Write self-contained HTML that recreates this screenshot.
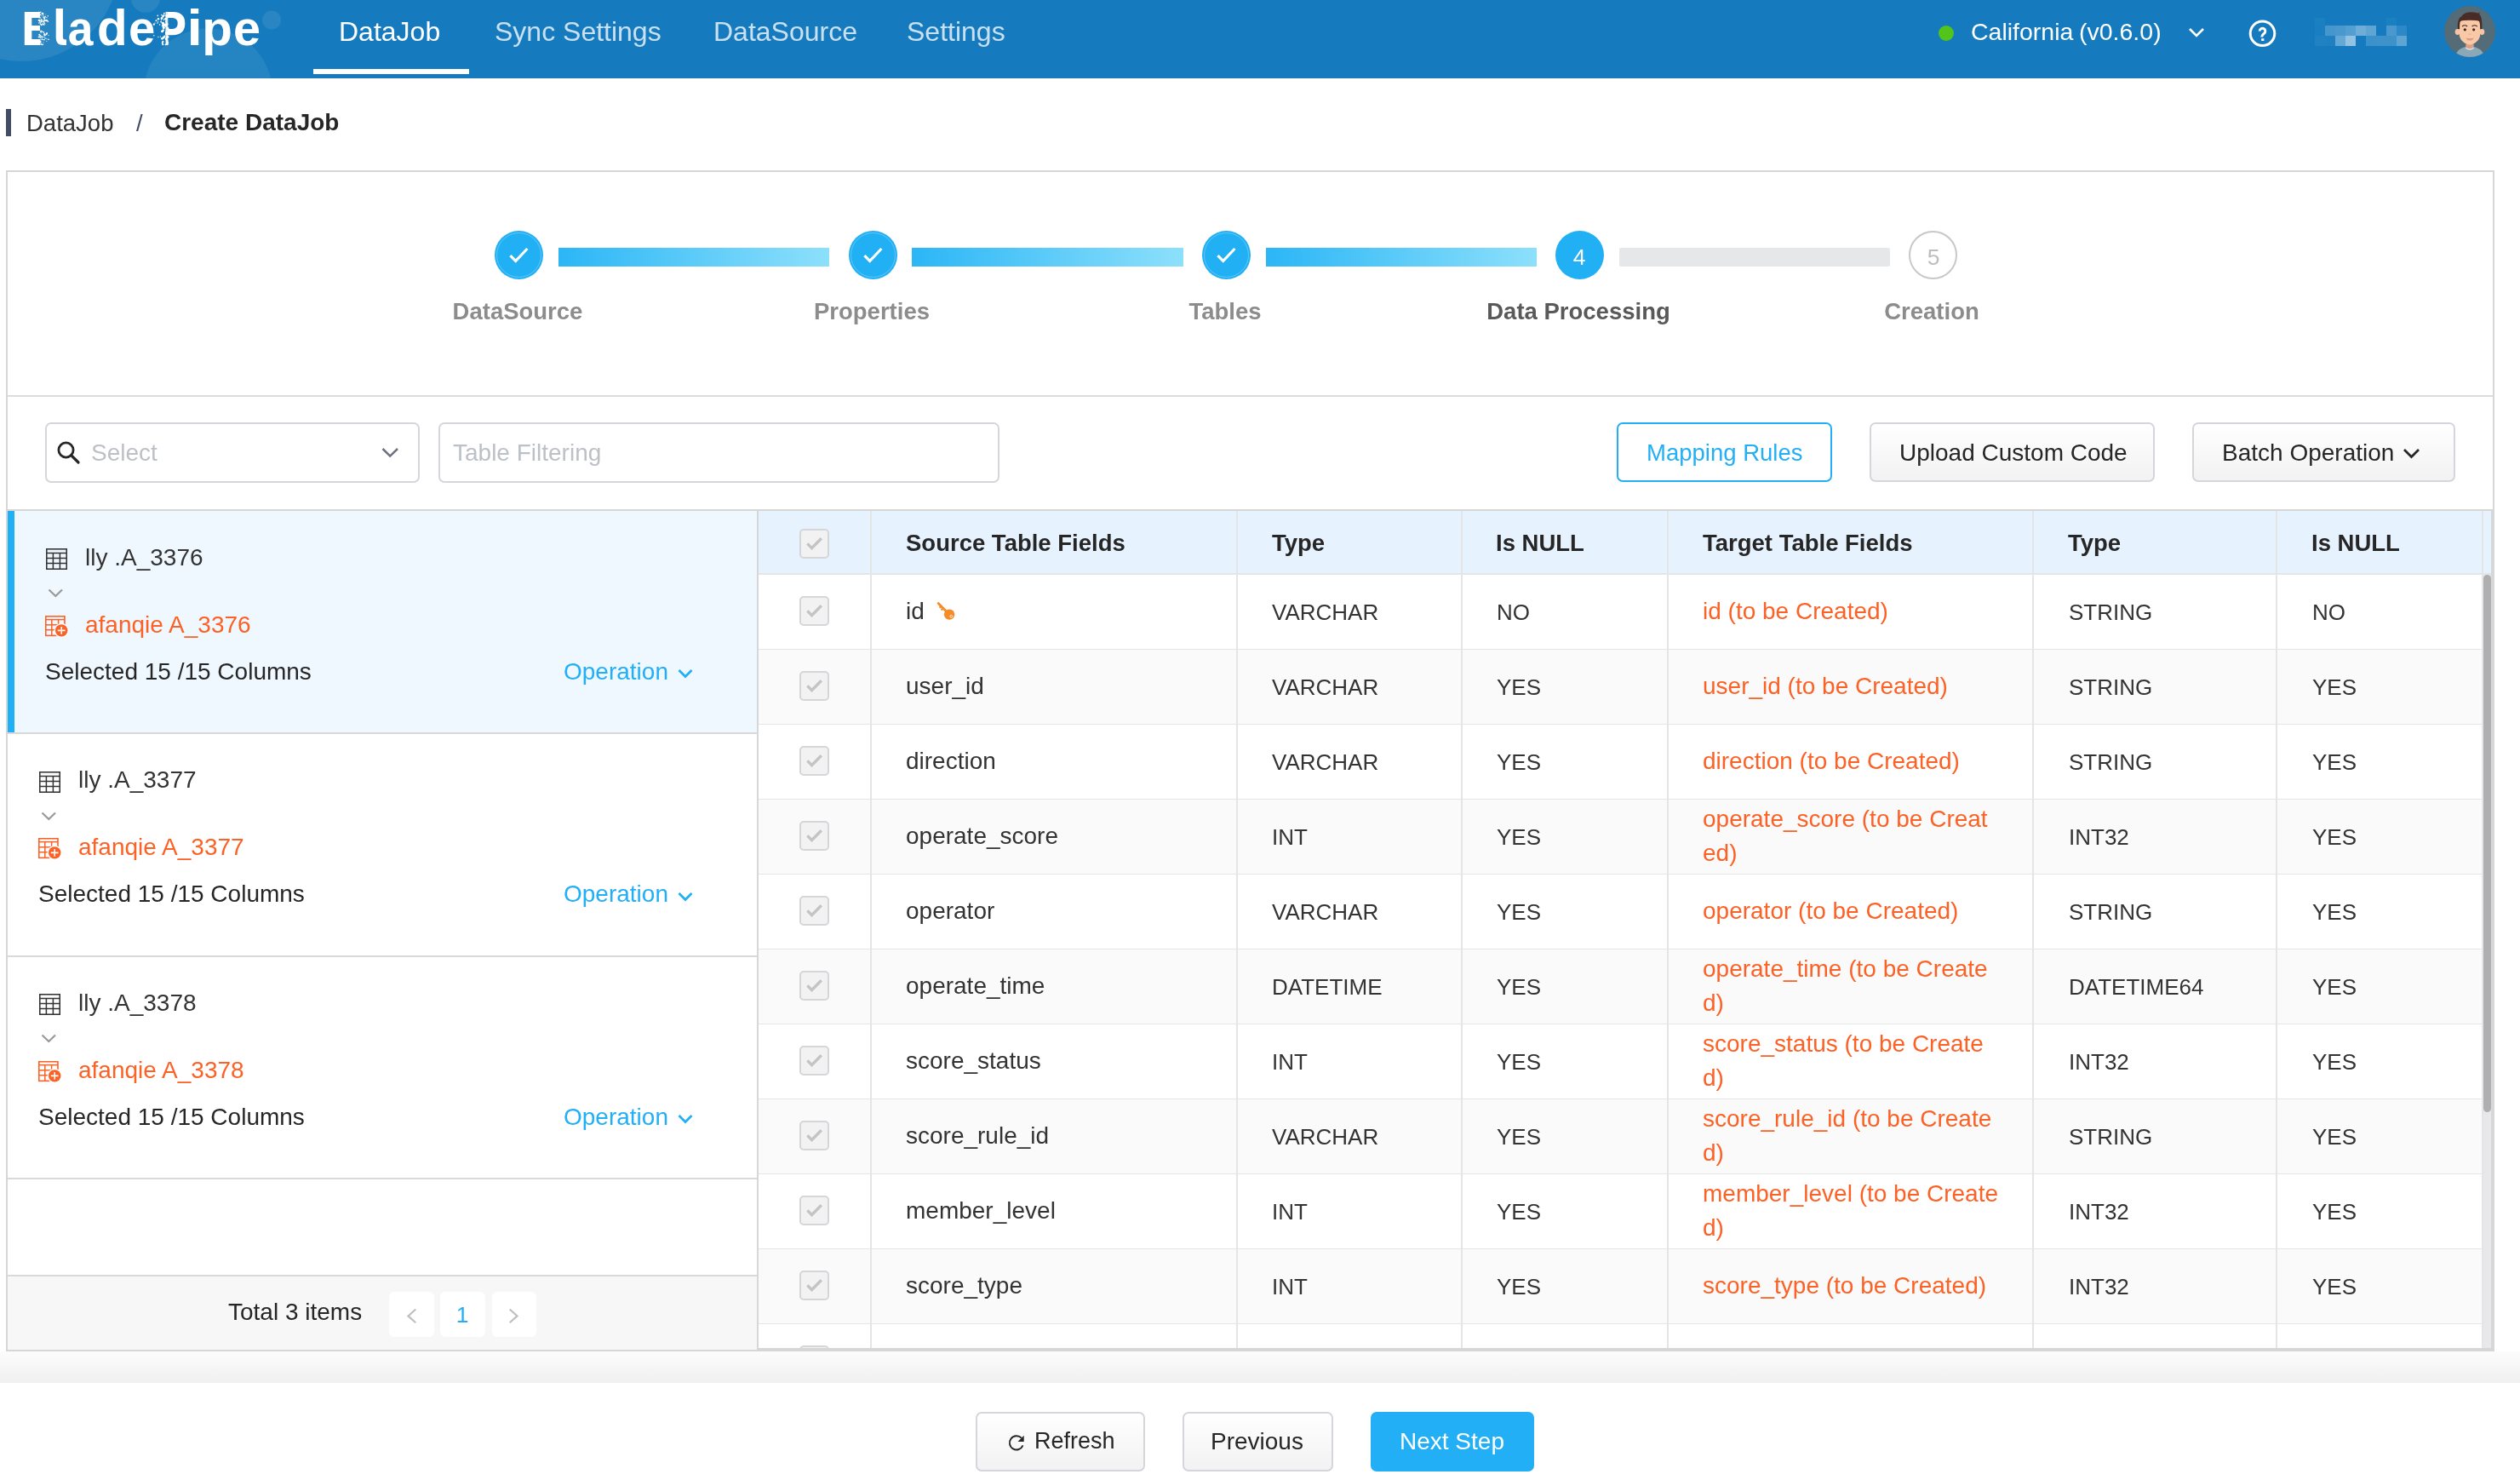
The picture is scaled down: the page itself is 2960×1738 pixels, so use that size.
<!DOCTYPE html>
<html><head><meta charset="utf-8"><title>BladePipe - Create DataJob</title>
<style>
html,body{margin:0;padding:0;}
body{width:2960px;height:1738px;position:relative;overflow:hidden;background:#fff;font-family:"Liberation Sans",sans-serif;}
.t{position:absolute;white-space:pre;will-change:transform;}
svg{display:block;}
</style></head><body>
<div style="position:absolute;left:0px;top:0px;width:2960px;height:92px;background:#157bbe;overflow:hidden"></div>
<svg style="position:absolute;left:0px;top:0px;" width="400" height="92" viewBox="0 0 400 92">
<circle cx="25.5" cy="-43" r="115" fill="rgba(255,255,255,0.085)"/>
<circle cx="171" cy="-2.3" r="17" fill="rgba(255,255,255,0.085)"/>
<circle cx="319" cy="23.5" r="11" fill="rgba(255,255,255,0.085)"/>
<circle cx="244.5" cy="109" r="75.5" fill="rgba(255,255,255,0.07)"/>
</svg>
<svg style="position:absolute;left:0px;top:0px;" width="320" height="92" viewBox="0 0 320 92"><text transform="matrix(0.9206 0 0 0.9866 79.70 52.9)" x="0" y="0" font-family="Liberation Sans" font-weight="700" font-size="58.0" fill="#fff">a</text><text transform="matrix(1.0072 0 0 1.0178 114.06 52.9)" x="0" y="0" font-family="Liberation Sans" font-weight="700" font-size="58.0" fill="#fff">d</text><text transform="matrix(0.9698 0 0 0.9930 150.95 52.9)" x="0" y="0" font-family="Liberation Sans" font-weight="700" font-size="58.0" fill="#fff">e</text><text transform="matrix(1.1367 0 0 1.0178 219.39 52.9)" x="0" y="0" font-family="Liberation Sans" font-weight="700" font-size="58.0" fill="#fff">i</text><text transform="matrix(1.0072 0 0 0.9930 237.30 52.9)" x="0" y="0" font-family="Liberation Sans" font-weight="700" font-size="58.0" fill="#fff">p</text><text transform="matrix(0.9950 0 0 0.9930 273.99 52.9)" x="0" y="0" font-family="Liberation Sans" font-weight="700" font-size="58.0" fill="#fff">e</text><path d="M65.7 10.1 H73.9 V44 q0 2.4 2.3 2.4 h1.8 V52.9 h-3.6 q-8.7 0 -8.7 -8.5 z" fill="#fff"/><path d="M28.8 13.9 H47.1 V21.1 H37.3 V30 H47 V36 H37.3 V46 H47.1 V52.9 H28.8 Z" fill="#fff"/><circle cx="49.71" cy="19.88" r="0.43" fill="#fff"/><circle cx="50.25" cy="16.26" r="1.00" fill="#fff"/><circle cx="46.41" cy="17.54" r="0.48" fill="#fff"/><circle cx="56.25" cy="18.83" r="0.71" fill="#fff"/><circle cx="50.66" cy="52.07" r="0.62" fill="#fff"/><circle cx="56.66" cy="25.29" r="0.59" fill="#fff"/><circle cx="47.03" cy="26.03" r="0.88" fill="#fff"/><circle cx="47.85" cy="36.68" r="1.03" fill="#fff"/><circle cx="46.32" cy="16.32" r="0.57" fill="#fff"/><circle cx="49.58" cy="36.84" r="0.83" fill="#fff"/><circle cx="49.40" cy="44.98" r="0.60" fill="#fff"/><circle cx="48.67" cy="36.40" r="0.76" fill="#fff"/><circle cx="50.94" cy="43.53" r="0.66" fill="#fff"/><circle cx="51.66" cy="39.90" r="0.51" fill="#fff"/><circle cx="51.50" cy="20.55" r="0.51" fill="#fff"/><circle cx="46.27" cy="43.96" r="0.54" fill="#fff"/><circle cx="48.72" cy="29.25" r="0.99" fill="#fff"/><circle cx="47.46" cy="20.87" r="0.72" fill="#fff"/><circle cx="53.16" cy="24.25" r="0.54" fill="#fff"/><circle cx="50.95" cy="28.40" r="0.99" fill="#fff"/><circle cx="46.20" cy="49.08" r="1.05" fill="#fff"/><circle cx="50.69" cy="18.04" r="0.69" fill="#fff"/><circle cx="46.31" cy="16.63" r="0.49" fill="#fff"/><circle cx="47.61" cy="27.26" r="0.53" fill="#fff"/><circle cx="45.50" cy="19.90" r="0.46" fill="#fff"/><circle cx="53.48" cy="19.79" r="0.62" fill="#fff"/><circle cx="50.02" cy="28.20" r="0.46" fill="#fff"/><circle cx="46.62" cy="17.99" r="0.56" fill="#fff"/><circle cx="48.94" cy="46.33" r="0.57" fill="#fff"/><circle cx="45.80" cy="51.09" r="0.77" fill="#fff"/><circle cx="54.55" cy="24.18" r="0.98" fill="#fff"/><circle cx="47.67" cy="44.11" r="0.89" fill="#fff"/><circle cx="50.12" cy="15.13" r="0.67" fill="#fff"/><circle cx="49.13" cy="24.11" r="0.67" fill="#fff"/><circle cx="48.37" cy="22.85" r="0.74" fill="#fff"/><circle cx="48.16" cy="38.34" r="0.64" fill="#fff"/><circle cx="53.99" cy="45.19" r="0.62" fill="#fff"/><circle cx="47.82" cy="44.78" r="0.44" fill="#fff"/><circle cx="54.92" cy="20.63" r="0.58" fill="#fff"/><circle cx="47.46" cy="49.29" r="1.03" fill="#fff"/><circle cx="47.40" cy="46.23" r="0.48" fill="#fff"/><circle cx="47.20" cy="14.56" r="0.73" fill="#fff"/><circle cx="56.83" cy="46.22" r="0.81" fill="#fff"/><circle cx="48.77" cy="25.43" r="0.96" fill="#fff"/><circle cx="53.12" cy="24.12" r="0.54" fill="#fff"/><circle cx="47.20" cy="49.49" r="0.58" fill="#fff"/><circle cx="50.97" cy="49.79" r="0.56" fill="#fff"/><circle cx="47.88" cy="14.15" r="0.66" fill="#fff"/><circle cx="52.72" cy="44.59" r="0.69" fill="#fff"/><circle cx="52.78" cy="23.69" r="1.02" fill="#fff"/><circle cx="51.26" cy="37.89" r="0.95" fill="#fff"/><circle cx="52.16" cy="41.02" r="0.97" fill="#fff"/><circle cx="57.76" cy="46.76" r="0.41" fill="#fff"/><circle cx="46.44" cy="23.38" r="0.42" fill="#fff"/><circle cx="47.51" cy="41.93" r="0.86" fill="#fff"/><circle cx="47.36" cy="48.43" r="0.98" fill="#fff"/><circle cx="48.35" cy="51.15" r="0.71" fill="#fff"/><circle cx="52.20" cy="27.23" r="0.78" fill="#fff"/><circle cx="49.64" cy="42.16" r="0.40" fill="#fff"/><circle cx="45.74" cy="26.93" r="0.65" fill="#fff"/><circle cx="46.86" cy="24.36" r="1.00" fill="#fff"/><circle cx="55.63" cy="24.55" r="0.94" fill="#fff"/><circle cx="52.92" cy="41.32" r="0.96" fill="#fff"/><circle cx="46.25" cy="40.84" r="1.03" fill="#fff"/><circle cx="46.44" cy="50.60" r="0.56" fill="#fff"/><circle cx="48.60" cy="18.27" r="0.47" fill="#fff"/><circle cx="46.15" cy="21.87" r="0.50" fill="#fff"/><circle cx="49.47" cy="43.62" r="0.74" fill="#fff"/><circle cx="52.00" cy="20.94" r="0.84" fill="#fff"/><circle cx="45.74" cy="23.77" r="1.01" fill="#fff"/><circle cx="51.94" cy="46.55" r="0.87" fill="#fff"/><circle cx="49.96" cy="46.46" r="0.82" fill="#fff"/><circle cx="50.02" cy="16.12" r="0.90" fill="#fff"/><circle cx="46.42" cy="42.89" r="0.70" fill="#fff"/><circle cx="47.62" cy="17.29" r="0.76" fill="#fff"/><circle cx="49.17" cy="23.45" r="0.43" fill="#fff"/><circle cx="51.47" cy="20.14" r="0.91" fill="#fff"/><circle cx="49.52" cy="27.91" r="0.55" fill="#fff"/><circle cx="52.04" cy="21.84" r="1.00" fill="#fff"/><circle cx="45.56" cy="24.30" r="0.82" fill="#fff"/><circle cx="50.69" cy="15.63" r="0.60" fill="#fff"/><circle cx="49.46" cy="23.08" r="0.48" fill="#fff"/><circle cx="54.81" cy="48.28" r="0.56" fill="#fff"/><circle cx="49.74" cy="52.40" r="0.81" fill="#fff"/><circle cx="54.91" cy="39.09" r="0.85" fill="#fff"/><circle cx="55.04" cy="45.68" r="0.47" fill="#fff"/><circle cx="54.51" cy="22.97" r="0.45" fill="#fff"/><circle cx="47.23" cy="28.07" r="0.74" fill="#fff"/><circle cx="52.46" cy="39.71" r="0.78" fill="#fff"/><circle cx="55.08" cy="23.84" r="0.65" fill="#fff"/><circle cx="48.95" cy="42.44" r="0.55" fill="#fff"/><circle cx="51.92" cy="28.92" r="0.79" fill="#fff"/><circle cx="53.86" cy="17.02" r="0.41" fill="#fff"/><circle cx="48.80" cy="42.99" r="0.60" fill="#fff"/><circle cx="46.29" cy="24.48" r="0.70" fill="#fff"/><circle cx="54.50" cy="40.35" r="1.02" fill="#fff"/><circle cx="48.09" cy="52.15" r="0.82" fill="#fff"/><circle cx="51.34" cy="24.48" r="0.97" fill="#fff"/><circle cx="53.06" cy="19.53" r="0.71" fill="#fff"/><circle cx="57.03" cy="41.43" r="0.55" fill="#fff"/><circle cx="45.82" cy="14.14" r="0.56" fill="#fff"/><circle cx="51.36" cy="25.78" r="1.02" fill="#fff"/><circle cx="45.52" cy="43.28" r="0.86" fill="#fff"/><circle cx="47.06" cy="50.13" r="0.60" fill="#fff"/><circle cx="53.16" cy="28.07" r="0.41" fill="#fff"/><circle cx="49.08" cy="15.88" r="0.72" fill="#fff"/><circle cx="48.74" cy="24.36" r="0.84" fill="#fff"/><circle cx="47.97" cy="28.56" r="0.67" fill="#fff"/><circle cx="52.64" cy="42.06" r="0.57" fill="#fff"/><circle cx="55.28" cy="39.14" r="0.83" fill="#fff"/><path d="M197 13.9 H203 q14.3 0 14.3 13.6 q0 13.7 -14.6 13.7 H197 V33.9 H202.5 q6.2 0 6.2 -6.5 q0 -6.5 -6.2 -6.5 H197 Z" fill="#fff"/><circle cx="192.84" cy="15.80" r="0.94" fill="#fff"/><circle cx="194.89" cy="30.48" r="1.28" fill="#fff"/><circle cx="193.28" cy="42.59" r="1.10" fill="#fff"/><circle cx="186.00" cy="22.30" r="1.18" fill="#fff"/><circle cx="192.45" cy="23.27" r="0.82" fill="#fff"/><circle cx="185.86" cy="43.40" r="0.71" fill="#fff"/><circle cx="189.74" cy="21.62" r="0.66" fill="#fff"/><circle cx="194.74" cy="30.35" r="1.27" fill="#fff"/><circle cx="193.53" cy="29.45" r="0.81" fill="#fff"/><circle cx="195.84" cy="51.52" r="0.74" fill="#fff"/><circle cx="194.83" cy="29.45" r="1.50" fill="#fff"/><circle cx="196.27" cy="48.08" r="1.33" fill="#fff"/><circle cx="181.95" cy="27.01" r="0.63" fill="#fff"/><circle cx="196.77" cy="50.06" r="1.35" fill="#fff"/><circle cx="187.59" cy="28.89" r="0.76" fill="#fff"/><circle cx="195.09" cy="27.10" r="0.77" fill="#fff"/><circle cx="191.73" cy="27.86" r="1.56" fill="#fff"/><circle cx="196.91" cy="19.20" r="1.56" fill="#fff"/><circle cx="195.39" cy="45.72" r="1.42" fill="#fff"/><circle cx="191.11" cy="30.93" r="0.65" fill="#fff"/><circle cx="190.81" cy="49.44" r="0.79" fill="#fff"/><circle cx="195.96" cy="28.34" r="1.50" fill="#fff"/><circle cx="190.43" cy="45.35" r="1.37" fill="#fff"/><circle cx="195.74" cy="16.04" r="0.63" fill="#fff"/><circle cx="183.50" cy="24.27" r="1.02" fill="#fff"/><circle cx="191.40" cy="48.64" r="0.94" fill="#fff"/><circle cx="194.72" cy="37.95" r="0.86" fill="#fff"/><circle cx="180.81" cy="41.73" r="0.72" fill="#fff"/><circle cx="196.91" cy="43.21" r="1.52" fill="#fff"/><circle cx="196.44" cy="38.59" r="1.54" fill="#fff"/><circle cx="192.31" cy="32.56" r="1.56" fill="#fff"/><circle cx="196.28" cy="50.75" r="0.99" fill="#fff"/><circle cx="196.95" cy="33.25" r="1.53" fill="#fff"/><circle cx="190.11" cy="21.45" r="1.40" fill="#fff"/><circle cx="196.13" cy="43.87" r="1.21" fill="#fff"/><circle cx="184.94" cy="26.96" r="0.72" fill="#fff"/><circle cx="189.66" cy="17.50" r="0.64" fill="#fff"/><circle cx="188.34" cy="43.11" r="0.67" fill="#fff"/><circle cx="195.43" cy="35.50" r="0.93" fill="#fff"/><circle cx="196.33" cy="51.75" r="1.48" fill="#fff"/><circle cx="191.92" cy="17.70" r="0.70" fill="#fff"/><circle cx="196.61" cy="33.44" r="1.31" fill="#fff"/><circle cx="192.51" cy="30.34" r="1.22" fill="#fff"/><circle cx="195.45" cy="40.12" r="1.35" fill="#fff"/><circle cx="191.50" cy="19.10" r="1.44" fill="#fff"/><circle cx="189.12" cy="25.66" r="0.90" fill="#fff"/><circle cx="189.57" cy="22.07" r="0.67" fill="#fff"/><circle cx="189.38" cy="23.82" r="0.61" fill="#fff"/><circle cx="190.62" cy="26.90" r="1.00" fill="#fff"/><circle cx="191.32" cy="52.21" r="1.11" fill="#fff"/><circle cx="195.62" cy="39.33" r="1.59" fill="#fff"/><circle cx="185.26" cy="18.39" r="0.83" fill="#fff"/><circle cx="191.76" cy="49.25" r="0.64" fill="#fff"/><circle cx="185.70" cy="25.66" r="0.58" fill="#fff"/><circle cx="190.53" cy="36.66" r="1.53" fill="#fff"/><circle cx="180.78" cy="28.65" r="1.11" fill="#fff"/><circle cx="192.21" cy="44.06" r="1.55" fill="#fff"/><circle cx="195.41" cy="18.52" r="1.20" fill="#fff"/><circle cx="193.68" cy="28.51" r="0.74" fill="#fff"/><circle cx="193.88" cy="22.25" r="0.85" fill="#fff"/><circle cx="189.34" cy="22.23" r="0.51" fill="#fff"/><circle cx="191.48" cy="26.94" r="1.28" fill="#fff"/><circle cx="194.77" cy="22.23" r="1.40" fill="#fff"/><circle cx="191.84" cy="35.33" r="0.66" fill="#fff"/><circle cx="191.76" cy="35.41" r="1.24" fill="#fff"/><circle cx="193.12" cy="17.96" r="0.76" fill="#fff"/><circle cx="194.75" cy="25.27" r="0.91" fill="#fff"/><circle cx="190.71" cy="50.72" r="0.91" fill="#fff"/><circle cx="191.42" cy="30.32" r="1.46" fill="#fff"/><circle cx="194.52" cy="52.37" r="0.96" fill="#fff"/><rect x="194.5" y="13.9" width="2.8" height="39" fill="rgba(255,255,255,0.85)"/></svg>
<div class="t" style="left:398px;top:21.21px;font-size:32px;line-height:32px;color:#fff;font-weight:400;">DataJob</div>
<div class="t" style="left:581px;top:21.21px;font-size:32px;line-height:32px;color:rgba(255,255,255,0.77);font-weight:400;">Sync Settings</div>
<div class="t" style="left:838px;top:21.21px;font-size:32px;line-height:32px;color:rgba(255,255,255,0.77);font-weight:400;">DataSource</div>
<div class="t" style="left:1065px;top:21.21px;font-size:32px;line-height:32px;color:rgba(255,255,255,0.77);font-weight:400;">Settings</div>
<div style="position:absolute;left:368px;top:81px;width:183px;height:6px;background:#fff"></div>
<div style="position:absolute;left:2277px;top:30px;width:18px;height:18px;background:#52c41a;border-radius:50%"></div>
<div class="t" style="left:2315px;top:23.47px;font-size:28.5px;line-height:28.5px;color:#fff;font-weight:400;">California</div>
<div class="t" style="left:2442px;top:23.47px;font-size:28.5px;line-height:28.5px;color:#fff;font-weight:400;">(v0.6.0)</div>
<svg style="position:absolute;left:2568px;top:28px;" width="24" height="20" viewBox="0 0 24 20"><polyline points="4,6 12,14 20,6" fill="none" stroke="#fff" stroke-width="2.6"/></svg>
<svg style="position:absolute;left:2639px;top:21px;" width="36" height="36" viewBox="0 0 36 36"><circle cx="18.5" cy="18.3" r="14.3" fill="none" stroke="#fff" stroke-width="3"/><path d="M15.2 15.6 a3.3 3.3 0 1 1 5.2 2.7 c-1.3 0.9 -2.6 1.7 -2.6 3.6 v0.6" fill="none" stroke="#fff" stroke-width="3"/><rect x="17.2" y="24.2" width="3.2" height="2.8" fill="#fff"/></svg>
<div style="position:absolute;left:2719px;top:21px;width:12px;height:9px;background:#1a80c2"></div>
<div style="position:absolute;left:2803px;top:21px;width:12px;height:9px;background:#1b80c2"></div>
<div style="position:absolute;left:2719px;top:30px;width:12px;height:12px;background:#1a7fc1"></div>
<div style="position:absolute;left:2731px;top:30px;width:12px;height:12px;background:#4596cc"></div>
<div style="position:absolute;left:2743px;top:30px;width:12px;height:12px;background:#4a99ce"></div>
<div style="position:absolute;left:2755px;top:30px;width:12px;height:12px;background:#549fd1"></div>
<div style="position:absolute;left:2767px;top:30px;width:12px;height:12px;background:#6eadd8"></div>
<div style="position:absolute;left:2779px;top:30px;width:12px;height:12px;background:#5ea5d4"></div>
<div style="position:absolute;left:2803px;top:30px;width:12px;height:12px;background:#4a98cd"></div>
<div style="position:absolute;left:2815px;top:30px;width:12px;height:12px;background:#2c88c6"></div>
<div style="position:absolute;left:2719px;top:42px;width:12px;height:12px;background:#2081c3"></div>
<div style="position:absolute;left:2731px;top:42px;width:12px;height:12px;background:#2081c2"></div>
<div style="position:absolute;left:2743px;top:42px;width:12px;height:12px;background:#64a8d5"></div>
<div style="position:absolute;left:2755px;top:42px;width:12px;height:12px;background:#93c2e3"></div>
<div style="position:absolute;left:2779px;top:42px;width:12px;height:12px;background:#3b91ca"></div>
<div style="position:absolute;left:2791px;top:42px;width:12px;height:12px;background:#3e92ca"></div>
<div style="position:absolute;left:2803px;top:42px;width:12px;height:12px;background:#3e92ca"></div>
<div style="position:absolute;left:2815px;top:42px;width:12px;height:12px;background:#5fa5d4"></div>
<svg style="position:absolute;left:2871px;top:7px;" width="60" height="60" viewBox="0 0 60 60">
<defs><clipPath id="avc"><circle cx="30" cy="30" r="30"/></clipPath></defs>
<g clip-path="url(#avc)">
<rect width="60" height="60" fill="#546b78"/>
<path d="M13 60 q1.5 -11.5 17 -12.8 q15.5 1.3 17 12.8 z" fill="#8aa8b5"/>
<path d="M25.3 45 h9.4 v4.8 q-4.7 3.2 -9.4 0 z" fill="#dca08a"/>
<path d="M25.3 49.3 q4.7 3.4 9.4 0" fill="none" stroke="#d6e6ee" stroke-width="1.3"/>
<ellipse cx="15.6" cy="30.5" rx="2.9" ry="3.4" fill="#f7c3a4"/>
<ellipse cx="44.4" cy="30.5" rx="2.9" ry="3.4" fill="#f7c3a4"/>
<path d="M17.6 17 q0 -3.5 12.4 -3.5 q12.4 0 12.4 3.5 v15 q0 6 -4 9.6 q-3.8 4 -8.4 4 q-4.6 0 -8.4 -4 q-4 -3.6 -4 -9.6 z" fill="#f9c8a6"/>
<path d="M15.8 27 q-0.8 -12.5 4.5 -14.8 q2.8 -4.3 10 -5 q7.2 -0.2 9.9 1.6 q0.5 -0.8 0.8 -1.6 q0.8 1.3 0.4 2.8 q3.3 2.2 3.1 17 h-2.3 q0 -8.5 -1.6 -9.2 q-2.5 -1 -10.6 -1 q-8.1 0 -10.5 1 q-1.6 0.7 -1.4 9.2 z" fill="#4a2c27"/>
<path d="M21 24 q3 -2.4 6.2 0 M32.6 24 q3 -2.4 6.2 0" fill="none" stroke="#3e2622" stroke-width="1.1"/>
<circle cx="24.3" cy="27.8" r="1.6" fill="#3a2420"/>
<circle cx="34.7" cy="27.8" r="1.6" fill="#3a2420"/>
<path d="M28.6 33 q1.4 0.9 2.8 0" fill="none" stroke="#e2a990" stroke-width="0.9"/>
<path d="M25.6 37.4 q4.5 1.2 9 0 q-1 3.2 -4.5 3.2 q-3.5 0 -4.5 -3.2 z" fill="#dc9c84"/>
</g>
</svg>
<div style="position:absolute;left:7px;top:128px;width:6px;height:32px;background:#434d66"></div>
<div class="t" style="left:30.5px;top:130.72px;font-size:27.5px;line-height:27.5px;color:#333;font-weight:400;">DataJob</div>
<div class="t" style="left:160px;top:130.72px;font-size:27.5px;line-height:27.5px;color:#434d66;font-weight:400;">/</div>
<div class="t" style="left:193px;top:130.30px;font-size:28px;line-height:28px;color:#262626;font-weight:700;">Create DataJob</div>
<div style="position:absolute;left:7px;top:200px;width:2923px;height:1387px;border:2px solid #d6d6d6;box-sizing:border-box;background:#fff"></div>
<div style="position:absolute;left:9px;top:464px;width:2919px;height:2px;background:#dcdcdc"></div>
<div style="position:absolute;left:656px;top:291px;width:318px;height:22px;background:linear-gradient(90deg,#2bb6f6,#8de0fb)"></div>
<div style="position:absolute;left:1071px;top:291px;width:319px;height:22px;background:linear-gradient(90deg,#2bb6f6,#8de0fb)"></div>
<div style="position:absolute;left:1487px;top:291px;width:318px;height:22px;background:linear-gradient(90deg,#2bb6f6,#8de0fb)"></div>
<div style="position:absolute;left:1902px;top:291px;width:318px;height:22px;background:#e6e7e9;border-radius:2px"></div>
<svg style="position:absolute;left:581.0px;top:271px;" width="57" height="57" viewBox="0 0 57 57"><circle cx="28.5" cy="28.5" r="28.5" fill="#22b0f5"/><circle cx="28.5" cy="28.5" r="26" fill="none" stroke="rgba(255,255,255,0.35)" stroke-width="0.8"/><polyline points="18.4,29.2 24.7,35.5 38.4,21" fill="none" stroke="#fff" stroke-width="3.2"/></svg>
<div class="t" style="left:108.0px;width:1000px;text-align:center;top:352.22px;font-size:27.5px;line-height:27.5px;color:#8c8c8c;font-weight:700;">DataSource</div>
<svg style="position:absolute;left:996.5px;top:271px;" width="57" height="57" viewBox="0 0 57 57"><circle cx="28.5" cy="28.5" r="28.5" fill="#22b0f5"/><circle cx="28.5" cy="28.5" r="26" fill="none" stroke="rgba(255,255,255,0.35)" stroke-width="0.8"/><polyline points="18.4,29.2 24.7,35.5 38.4,21" fill="none" stroke="#fff" stroke-width="3.2"/></svg>
<div class="t" style="left:523.5px;width:1000px;text-align:center;top:352.22px;font-size:27.5px;line-height:27.5px;color:#8c8c8c;font-weight:700;">Properties</div>
<svg style="position:absolute;left:1412.0px;top:271px;" width="57" height="57" viewBox="0 0 57 57"><circle cx="28.5" cy="28.5" r="28.5" fill="#22b0f5"/><circle cx="28.5" cy="28.5" r="26" fill="none" stroke="rgba(255,255,255,0.35)" stroke-width="0.8"/><polyline points="18.4,29.2 24.7,35.5 38.4,21" fill="none" stroke="#fff" stroke-width="3.2"/></svg>
<div class="t" style="left:939.0px;width:1000px;text-align:center;top:352.22px;font-size:27.5px;line-height:27.5px;color:#8c8c8c;font-weight:700;">Tables</div>
<div style="position:absolute;left:1826.5px;top:271px;width:57.0px;height:57px;background:#22b0f5;border-radius:50%"></div>
<div class="t" style="left:1355px;width:1000px;text-align:center;top:288.57px;font-size:26.5px;line-height:26.5px;color:#fff;font-weight:400;">4</div>
<div class="t" style="left:1353.5px;width:1000px;text-align:center;top:352.22px;font-size:27.5px;line-height:27.5px;color:#595959;font-weight:700;">Data Processing</div>
<div style="position:absolute;left:2242.0px;top:271px;width:57.0px;height:57px;border:2px solid #c8c8c8;border-radius:50%;box-sizing:border-box"></div>
<div class="t" style="left:1770.5px;width:1000px;text-align:center;top:288.57px;font-size:26.5px;line-height:26.5px;color:#bdbdbd;font-weight:400;">5</div>
<div class="t" style="left:1769.0px;width:1000px;text-align:center;top:352.22px;font-size:27.5px;line-height:27.5px;color:#8c8c8c;font-weight:700;">Creation</div>
<div style="position:absolute;left:53px;top:496px;width:440px;height:71px;border:2px solid #d4d6db;border-radius:7px;box-sizing:border-box;background:#fff"></div>
<svg style="position:absolute;left:66px;top:517px;" width="30" height="30" viewBox="0 0 30 30"><circle cx="11.5" cy="11.5" r="8.6" fill="none" stroke="#262626" stroke-width="2.8"/><line x1="17.6" y1="17.6" x2="26" y2="26" stroke="#262626" stroke-width="3.2" stroke-linecap="round"/></svg>
<div class="t" style="left:107px;top:517.80px;font-size:28px;line-height:28px;color:#bcc0c7;font-weight:400;">Select</div>
<svg style="position:absolute;left:446px;top:521px;" width="26" height="20" viewBox="0 0 26 20"><polyline points="3.5,6 12.2,14.6 21,6" fill="none" stroke="#6b7180" stroke-width="2.5"/></svg>
<div style="position:absolute;left:515px;top:496px;width:659px;height:71px;border:2px solid #d4d6db;border-radius:7px;box-sizing:border-box;background:#fff"></div>
<div class="t" style="left:532px;top:518.30px;font-size:28px;line-height:28px;color:#bcc0c7;font-weight:400;">Table Filtering</div>
<div style="position:absolute;left:1899px;top:496px;width:253px;height:70px;border:2.5px solid #22aff5;border-radius:7px;box-sizing:border-box;background:#fff"></div>
<div class="t" style="left:1934px;top:518.22px;font-size:27.5px;line-height:27.5px;color:#22aff5;font-weight:400;">Mapping Rules</div>
<div style="position:absolute;left:2196px;top:496px;width:335px;height:70px;border:2px solid #d4d6db;border-radius:7px;box-sizing:border-box;background:linear-gradient(#ffffff,#f2f2f2)"></div>
<div class="t" style="left:2231px;top:517.80px;font-size:28px;line-height:28px;color:#262626;font-weight:400;">Upload Custom Code</div>
<div style="position:absolute;left:2575px;top:496px;width:309px;height:70px;border:2px solid #d4d6db;border-radius:7px;box-sizing:border-box;background:linear-gradient(#ffffff,#f2f2f2)"></div>
<div class="t" style="left:2610px;top:517.80px;font-size:28px;line-height:28px;color:#262626;font-weight:400;">Batch Operation</div>
<svg style="position:absolute;left:2820px;top:522px;" width="26" height="20" viewBox="0 0 26 20"><polyline points="4,6 12.5,14.5 21,6" fill="none" stroke="#262626" stroke-width="2.8"/></svg>
<div style="position:absolute;left:9px;top:598px;width:2919px;height:2px;background:#d6d6d6"></div>
<div style="position:absolute;left:889px;top:600px;width:2px;height:985px;background:#d5d7db"></div>
<div style="position:absolute;left:9px;top:600px;width:880px;height:260px;background:#eff7ff"></div>
<div style="position:absolute;left:9px;top:600px;width:8px;height:260px;background:#1fb0f5"></div>
<div style="position:absolute;left:9px;top:860.0px;width:880px;height:2.0px;background:#d9d9d9"></div>
<svg style="position:absolute;left:53.5px;top:644.3px;" width="25" height="25" viewBox="0 0 25 25"><rect x="0.75" y="0.75" width="23.5" height="23.5" fill="none" stroke="#333" stroke-width="1.6"/><line x1="0.75" y1="5.5" x2="24.25" y2="5.5" stroke="#333" stroke-width="1.5"/><line x1="0.75" y1="11.5" x2="24.25" y2="11.5" stroke="#333" stroke-width="1.5"/><line x1="0.75" y1="17.5" x2="24.25" y2="17.5" stroke="#333" stroke-width="1.5"/><line x1="8.4" y1="5.5" x2="8.4" y2="24.25" stroke="#333" stroke-width="1.5"/><line x1="16.4" y1="5.5" x2="16.4" y2="24.25" stroke="#333" stroke-width="1.5"/></svg>
<div class="t" style="left:99.5px;top:640.60px;font-size:28px;line-height:28px;color:#333;font-weight:400;">lly .A_3376</div>
<svg style="position:absolute;left:53.5px;top:686.0px;" width="22" height="18" viewBox="0 0 22 18"><polyline points="3.5,6.5 11.3,14 19,6.5" fill="none" stroke="#999" stroke-width="2.2"/></svg>
<svg style="position:absolute;left:52.5px;top:722.8px;" width="28" height="28" viewBox="0 0 28 28"><rect x="0.75" y="0.75" width="22.2" height="22.6" fill="none" stroke="#fc6125" stroke-width="1.6"/><line x1="0.75" y1="4.6" x2="23" y2="4.6" stroke="#fc6125" stroke-width="1.5"/><line x1="0.75" y1="10.8" x2="23" y2="10.8" stroke="#fc6125" stroke-width="1.5"/><line x1="0.75" y1="16.7" x2="23" y2="16.7" stroke="#fc6125" stroke-width="1.5"/><line x1="7.8" y1="4.6" x2="7.8" y2="23.4" stroke="#fc6125" stroke-width="1.5"/><line x1="15.6" y1="4.6" x2="15.6" y2="23.4" stroke="#fc6125" stroke-width="1.5"/><circle cx="19.2" cy="17.4" r="8.6" fill="#fff"/><circle cx="19.2" cy="17.4" r="7.2" fill="#fc6125"/><path d="M19.2 13 v8.8 M14.8 17.4 h8.8" stroke="#fff" stroke-width="1.6"/></svg>
<div class="t" style="left:99.5px;top:719.80px;font-size:28px;line-height:28px;color:#fc6125;font-weight:400;">afanqie A_3376</div>
<div class="t" style="left:52.5px;top:774.60px;font-size:28px;line-height:28px;color:#262626;font-weight:400;">Selected 15 /15 Columns</div>
<div class="t" style="left:662px;top:774.60px;font-size:28px;line-height:28px;color:#22aff5;font-weight:400;">Operation</div>
<svg style="position:absolute;left:794px;top:782.0px;" width="22" height="18" viewBox="0 0 22 18"><polyline points="3.5,5 11,12.5 18.5,5" fill="none" stroke="#1fb0f5" stroke-width="2.7"/></svg>
<div style="position:absolute;left:9px;top:1121.5px;width:880px;height:2.0px;background:#d9d9d9"></div>
<svg style="position:absolute;left:46px;top:905.8px;" width="25" height="25" viewBox="0 0 25 25"><rect x="0.75" y="0.75" width="23.5" height="23.5" fill="none" stroke="#333" stroke-width="1.6"/><line x1="0.75" y1="5.5" x2="24.25" y2="5.5" stroke="#333" stroke-width="1.5"/><line x1="0.75" y1="11.5" x2="24.25" y2="11.5" stroke="#333" stroke-width="1.5"/><line x1="0.75" y1="17.5" x2="24.25" y2="17.5" stroke="#333" stroke-width="1.5"/><line x1="8.4" y1="5.5" x2="8.4" y2="24.25" stroke="#333" stroke-width="1.5"/><line x1="16.4" y1="5.5" x2="16.4" y2="24.25" stroke="#333" stroke-width="1.5"/></svg>
<div class="t" style="left:92px;top:902.10px;font-size:28px;line-height:28px;color:#333;font-weight:400;">lly .A_3377</div>
<svg style="position:absolute;left:46px;top:947.5px;" width="22" height="18" viewBox="0 0 22 18"><polyline points="3.5,6.5 11.3,14 19,6.5" fill="none" stroke="#999" stroke-width="2.2"/></svg>
<svg style="position:absolute;left:45px;top:984.3px;" width="28" height="28" viewBox="0 0 28 28"><rect x="0.75" y="0.75" width="22.2" height="22.6" fill="none" stroke="#fc6125" stroke-width="1.6"/><line x1="0.75" y1="4.6" x2="23" y2="4.6" stroke="#fc6125" stroke-width="1.5"/><line x1="0.75" y1="10.8" x2="23" y2="10.8" stroke="#fc6125" stroke-width="1.5"/><line x1="0.75" y1="16.7" x2="23" y2="16.7" stroke="#fc6125" stroke-width="1.5"/><line x1="7.8" y1="4.6" x2="7.8" y2="23.4" stroke="#fc6125" stroke-width="1.5"/><line x1="15.6" y1="4.6" x2="15.6" y2="23.4" stroke="#fc6125" stroke-width="1.5"/><circle cx="19.2" cy="17.4" r="8.6" fill="#fff"/><circle cx="19.2" cy="17.4" r="7.2" fill="#fc6125"/><path d="M19.2 13 v8.8 M14.8 17.4 h8.8" stroke="#fff" stroke-width="1.6"/></svg>
<div class="t" style="left:92px;top:981.30px;font-size:28px;line-height:28px;color:#fc6125;font-weight:400;">afanqie A_3377</div>
<div class="t" style="left:45px;top:1036.10px;font-size:28px;line-height:28px;color:#262626;font-weight:400;">Selected 15 /15 Columns</div>
<div class="t" style="left:662px;top:1036.10px;font-size:28px;line-height:28px;color:#22aff5;font-weight:400;">Operation</div>
<svg style="position:absolute;left:794px;top:1043.5px;" width="22" height="18" viewBox="0 0 22 18"><polyline points="3.5,5 11,12.5 18.5,5" fill="none" stroke="#1fb0f5" stroke-width="2.7"/></svg>
<div style="position:absolute;left:9px;top:1383.0px;width:880px;height:2.0px;background:#d9d9d9"></div>
<svg style="position:absolute;left:46px;top:1167.3px;" width="25" height="25" viewBox="0 0 25 25"><rect x="0.75" y="0.75" width="23.5" height="23.5" fill="none" stroke="#333" stroke-width="1.6"/><line x1="0.75" y1="5.5" x2="24.25" y2="5.5" stroke="#333" stroke-width="1.5"/><line x1="0.75" y1="11.5" x2="24.25" y2="11.5" stroke="#333" stroke-width="1.5"/><line x1="0.75" y1="17.5" x2="24.25" y2="17.5" stroke="#333" stroke-width="1.5"/><line x1="8.4" y1="5.5" x2="8.4" y2="24.25" stroke="#333" stroke-width="1.5"/><line x1="16.4" y1="5.5" x2="16.4" y2="24.25" stroke="#333" stroke-width="1.5"/></svg>
<div class="t" style="left:92px;top:1163.60px;font-size:28px;line-height:28px;color:#333;font-weight:400;">lly .A_3378</div>
<svg style="position:absolute;left:46px;top:1209.0px;" width="22" height="18" viewBox="0 0 22 18"><polyline points="3.5,6.5 11.3,14 19,6.5" fill="none" stroke="#999" stroke-width="2.2"/></svg>
<svg style="position:absolute;left:45px;top:1245.8px;" width="28" height="28" viewBox="0 0 28 28"><rect x="0.75" y="0.75" width="22.2" height="22.6" fill="none" stroke="#fc6125" stroke-width="1.6"/><line x1="0.75" y1="4.6" x2="23" y2="4.6" stroke="#fc6125" stroke-width="1.5"/><line x1="0.75" y1="10.8" x2="23" y2="10.8" stroke="#fc6125" stroke-width="1.5"/><line x1="0.75" y1="16.7" x2="23" y2="16.7" stroke="#fc6125" stroke-width="1.5"/><line x1="7.8" y1="4.6" x2="7.8" y2="23.4" stroke="#fc6125" stroke-width="1.5"/><line x1="15.6" y1="4.6" x2="15.6" y2="23.4" stroke="#fc6125" stroke-width="1.5"/><circle cx="19.2" cy="17.4" r="8.6" fill="#fff"/><circle cx="19.2" cy="17.4" r="7.2" fill="#fc6125"/><path d="M19.2 13 v8.8 M14.8 17.4 h8.8" stroke="#fff" stroke-width="1.6"/></svg>
<div class="t" style="left:92px;top:1242.80px;font-size:28px;line-height:28px;color:#fc6125;font-weight:400;">afanqie A_3378</div>
<div class="t" style="left:45px;top:1297.60px;font-size:28px;line-height:28px;color:#262626;font-weight:400;">Selected 15 /15 Columns</div>
<div class="t" style="left:662px;top:1297.60px;font-size:28px;line-height:28px;color:#22aff5;font-weight:400;">Operation</div>
<svg style="position:absolute;left:794px;top:1305.0px;" width="22" height="18" viewBox="0 0 22 18"><polyline points="3.5,5 11,12.5 18.5,5" fill="none" stroke="#1fb0f5" stroke-width="2.7"/></svg>
<div style="position:absolute;left:9px;top:1497px;width:880px;height:2px;background:#d9d9d9"></div>
<div style="position:absolute;left:9px;top:1499px;width:880px;height:86px;background:#f7f7f7"></div>
<div class="t" style="left:268px;top:1526.80px;font-size:28px;line-height:28px;color:#262626;font-weight:400;">Total 3 items</div>
<div style="position:absolute;left:457px;top:1517px;width:53px;height:52.5px;background:#fff;border-radius:6px"></div>
<div style="position:absolute;left:517px;top:1517px;width:53px;height:52.5px;background:#fff;border-radius:6px"></div>
<div style="position:absolute;left:578px;top:1517px;width:52px;height:52.5px;background:#fff;border-radius:6px"></div>
<svg style="position:absolute;left:457px;top:1517px;" width="53" height="52" viewBox="0 0 53 52"><polyline points="31.3,20.5 22.5,28.4 31.3,36.2" fill="none" stroke="#bfbfbf" stroke-width="2.2"/></svg>
<div class="t" style="left:43px;width:1000px;text-align:center;top:1530.77px;font-size:26.5px;line-height:26.5px;color:#22aff5;font-weight:400;">1</div>
<svg style="position:absolute;left:578px;top:1517px;" width="52" height="52" viewBox="0 0 52 52"><polyline points="20.7,20.5 29.5,28.4 20.7,36.2" fill="none" stroke="#bfbfbf" stroke-width="2.2"/></svg>
<div style="position:absolute;left:891px;top:600px;width:2024px;height:73px;background:#e6f2fe"></div>
<div style="position:absolute;left:891px;top:673px;width:2024px;height:2px;background:#e4e5e7"></div>
<div style="position:absolute;left:0;top:0;width:2960px;height:1583px;overflow:hidden">
<div style="position:absolute;left:891px;top:675px;width:2024px;height:87px;background:#fff"></div>
<div style="position:absolute;left:891px;top:762px;width:2024px;height:2px;background:#e4e5e7"></div>
<div style="position:absolute;left:891px;top:763px;width:2024px;height:87px;background:#fafafa"></div>
<div style="position:absolute;left:891px;top:850px;width:2024px;height:2px;background:#e4e5e7"></div>
<div style="position:absolute;left:891px;top:851px;width:2024px;height:87px;background:#fff"></div>
<div style="position:absolute;left:891px;top:938px;width:2024px;height:2px;background:#e4e5e7"></div>
<div style="position:absolute;left:891px;top:939px;width:2024px;height:87px;background:#fafafa"></div>
<div style="position:absolute;left:891px;top:1026px;width:2024px;height:2px;background:#e4e5e7"></div>
<div style="position:absolute;left:891px;top:1027px;width:2024px;height:87px;background:#fff"></div>
<div style="position:absolute;left:891px;top:1114px;width:2024px;height:2px;background:#e4e5e7"></div>
<div style="position:absolute;left:891px;top:1115px;width:2024px;height:87px;background:#fafafa"></div>
<div style="position:absolute;left:891px;top:1202px;width:2024px;height:2px;background:#e4e5e7"></div>
<div style="position:absolute;left:891px;top:1203px;width:2024px;height:87px;background:#fff"></div>
<div style="position:absolute;left:891px;top:1290px;width:2024px;height:2px;background:#e4e5e7"></div>
<div style="position:absolute;left:891px;top:1291px;width:2024px;height:87px;background:#fafafa"></div>
<div style="position:absolute;left:891px;top:1378px;width:2024px;height:2px;background:#e4e5e7"></div>
<div style="position:absolute;left:891px;top:1379px;width:2024px;height:87px;background:#fff"></div>
<div style="position:absolute;left:891px;top:1466px;width:2024px;height:2px;background:#e4e5e7"></div>
<div style="position:absolute;left:891px;top:1467px;width:2024px;height:87px;background:#fafafa"></div>
<div style="position:absolute;left:891px;top:1554px;width:2024px;height:2px;background:#e4e5e7"></div>
<div style="position:absolute;left:891px;top:1555px;width:2024px;height:87px;background:#fff"></div>
<div style="position:absolute;left:891px;top:1642px;width:2024px;height:2px;background:#e4e5e7"></div>
</div>
<div style="position:absolute;left:1022px;top:600px;width:2px;height:983px;background:#e4e5e7"></div>
<div style="position:absolute;left:1452px;top:600px;width:2px;height:983px;background:#e4e5e7"></div>
<div style="position:absolute;left:1716px;top:600px;width:2px;height:983px;background:#e4e5e7"></div>
<div style="position:absolute;left:1958px;top:600px;width:2px;height:983px;background:#e4e5e7"></div>
<div style="position:absolute;left:2387px;top:600px;width:2px;height:983px;background:#e4e5e7"></div>
<div style="position:absolute;left:2673px;top:600px;width:2px;height:983px;background:#e4e5e7"></div>
<div style="position:absolute;left:2915px;top:600px;width:2px;height:983px;background:#e4e5e7"></div>
<div style="position:absolute;left:2917px;top:600px;width:9px;height:73px;background:#e6f2fe"></div>
<div style="position:absolute;left:2917px;top:673px;width:9px;height:2px;background:#e4e5e7"></div>
<div style="position:absolute;left:2917px;top:675px;width:9px;height:908px;background:#e8e8e8"></div>
<div style="position:absolute;left:2915px;top:600px;width:2px;height:983px;background:#e4e5e7"></div>
<div style="position:absolute;left:2917px;top:675px;width:9px;height:631px;background:#afafaf;border-radius:4.5px"></div>
<div style="position:absolute;left:2926px;top:600px;width:2px;height:985px;background:#d6d7db"></div>
<div style="position:absolute;left:891px;top:1583px;width:2037px;height:2px;background:#d6d6d6"></div>
<svg style="position:absolute;left:939px;top:621px;" width="35" height="35" viewBox="0 0 35 35"><rect x="1" y="1" width="33" height="33" rx="4" fill="#f2f2f2" stroke="#d5d6da" stroke-width="2"/><polyline points="9.3,17.4 14.5,22.6 25.8,11.3" fill="none" stroke="#c4c4c4" stroke-width="3.4"/></svg>
<div class="t" style="left:1064px;top:623.72px;font-size:27.5px;line-height:27.5px;color:#262626;font-weight:700;">Source Table Fields</div>
<div class="t" style="left:1494px;top:623.72px;font-size:27.5px;line-height:27.5px;color:#262626;font-weight:700;">Type</div>
<div class="t" style="left:1757px;top:623.72px;font-size:27.5px;line-height:27.5px;color:#262626;font-weight:700;">Is NULL</div>
<div class="t" style="left:2000px;top:623.72px;font-size:27.5px;line-height:27.5px;color:#262626;font-weight:700;">Target Table Fields</div>
<div class="t" style="left:2429px;top:623.72px;font-size:27.5px;line-height:27.5px;color:#262626;font-weight:700;">Type</div>
<div class="t" style="left:2715px;top:623.72px;font-size:27.5px;line-height:27.5px;color:#262626;font-weight:700;">Is NULL</div>
<div style="position:absolute;left:0;top:0;width:2960px;height:1583px;overflow:hidden">
<svg style="position:absolute;left:939px;top:700px;" width="35" height="35" viewBox="0 0 35 35"><rect x="1" y="1" width="33" height="33" rx="4" fill="#f2f2f2" stroke="#d5d6da" stroke-width="2"/><polyline points="9.3,17.4 14.5,22.6 25.8,11.3" fill="none" stroke="#c4c4c4" stroke-width="3.4"/></svg>
<div class="t" style="left:1064px;top:704.10px;font-size:28px;line-height:28px;color:#333;font-weight:400;">id</div>
<svg style="position:absolute;left:1097px;top:702px;" width="30" height="30" viewBox="0 0 30 30"><line x1="5.2" y1="6.5" x2="17" y2="18.4" stroke="#f68c28" stroke-width="2.8" stroke-linecap="round"/><circle cx="7.4" cy="11" r="1.3" fill="#f68c28"/><circle cx="9.4" cy="13.6" r="1.3" fill="#f68c28"/><circle cx="18.1" cy="19.6" r="6.2" fill="#f68c28"/><circle cx="20.3" cy="21.8" r="1.4" fill="none" stroke="#fff" stroke-width="0.8"/></svg>
<div class="t" style="left:1494px;top:705.79px;font-size:26px;line-height:26px;color:#333;font-weight:400;">VARCHAR</div>
<div class="t" style="left:1758px;top:705.79px;font-size:26px;line-height:26px;color:#333;font-weight:400;">NO</div>
<div class="t" style="left:2000px;top:704.10px;font-size:28px;line-height:28px;color:#fc6125;font-weight:400;">id (to be Created)</div>
<div class="t" style="left:2430px;top:705.79px;font-size:26px;line-height:26px;color:#333;font-weight:400;">STRING</div>
<div class="t" style="left:2716px;top:705.79px;font-size:26px;line-height:26px;color:#333;font-weight:400;">NO</div>
<svg style="position:absolute;left:939px;top:788px;" width="35" height="35" viewBox="0 0 35 35"><rect x="1" y="1" width="33" height="33" rx="4" fill="#f2f2f2" stroke="#d5d6da" stroke-width="2"/><polyline points="9.3,17.4 14.5,22.6 25.8,11.3" fill="none" stroke="#c4c4c4" stroke-width="3.4"/></svg>
<div class="t" style="left:1064px;top:792.10px;font-size:28px;line-height:28px;color:#333;font-weight:400;">user_id</div>
<div class="t" style="left:1494px;top:793.79px;font-size:26px;line-height:26px;color:#333;font-weight:400;">VARCHAR</div>
<div class="t" style="left:1758px;top:793.79px;font-size:26px;line-height:26px;color:#333;font-weight:400;">YES</div>
<div class="t" style="left:2000px;top:792.10px;font-size:28px;line-height:28px;color:#fc6125;font-weight:400;">user_id (to be Created)</div>
<div class="t" style="left:2430px;top:793.79px;font-size:26px;line-height:26px;color:#333;font-weight:400;">STRING</div>
<div class="t" style="left:2716px;top:793.79px;font-size:26px;line-height:26px;color:#333;font-weight:400;">YES</div>
<svg style="position:absolute;left:939px;top:876px;" width="35" height="35" viewBox="0 0 35 35"><rect x="1" y="1" width="33" height="33" rx="4" fill="#f2f2f2" stroke="#d5d6da" stroke-width="2"/><polyline points="9.3,17.4 14.5,22.6 25.8,11.3" fill="none" stroke="#c4c4c4" stroke-width="3.4"/></svg>
<div class="t" style="left:1064px;top:880.10px;font-size:28px;line-height:28px;color:#333;font-weight:400;">direction</div>
<div class="t" style="left:1494px;top:881.79px;font-size:26px;line-height:26px;color:#333;font-weight:400;">VARCHAR</div>
<div class="t" style="left:1758px;top:881.79px;font-size:26px;line-height:26px;color:#333;font-weight:400;">YES</div>
<div class="t" style="left:2000px;top:880.10px;font-size:28px;line-height:28px;color:#fc6125;font-weight:400;">direction (to be Created)</div>
<div class="t" style="left:2430px;top:881.79px;font-size:26px;line-height:26px;color:#333;font-weight:400;">STRING</div>
<div class="t" style="left:2716px;top:881.79px;font-size:26px;line-height:26px;color:#333;font-weight:400;">YES</div>
<svg style="position:absolute;left:939px;top:964px;" width="35" height="35" viewBox="0 0 35 35"><rect x="1" y="1" width="33" height="33" rx="4" fill="#f2f2f2" stroke="#d5d6da" stroke-width="2"/><polyline points="9.3,17.4 14.5,22.6 25.8,11.3" fill="none" stroke="#c4c4c4" stroke-width="3.4"/></svg>
<div class="t" style="left:1064px;top:968.10px;font-size:28px;line-height:28px;color:#333;font-weight:400;">operate_score</div>
<div class="t" style="left:1494px;top:969.79px;font-size:26px;line-height:26px;color:#333;font-weight:400;">INT</div>
<div class="t" style="left:1758px;top:969.79px;font-size:26px;line-height:26px;color:#333;font-weight:400;">YES</div>
<div class="t" style="left:2000px;top:948.00px;font-size:28px;line-height:28px;color:#fc6125;font-weight:400;">operate_score (to be Creat</div>
<div class="t" style="left:2000px;top:988.10px;font-size:28px;line-height:28px;color:#fc6125;font-weight:400;">ed)</div>
<div class="t" style="left:2430px;top:969.79px;font-size:26px;line-height:26px;color:#333;font-weight:400;">INT32</div>
<div class="t" style="left:2716px;top:969.79px;font-size:26px;line-height:26px;color:#333;font-weight:400;">YES</div>
<svg style="position:absolute;left:939px;top:1052px;" width="35" height="35" viewBox="0 0 35 35"><rect x="1" y="1" width="33" height="33" rx="4" fill="#f2f2f2" stroke="#d5d6da" stroke-width="2"/><polyline points="9.3,17.4 14.5,22.6 25.8,11.3" fill="none" stroke="#c4c4c4" stroke-width="3.4"/></svg>
<div class="t" style="left:1064px;top:1056.10px;font-size:28px;line-height:28px;color:#333;font-weight:400;">operator</div>
<div class="t" style="left:1494px;top:1057.79px;font-size:26px;line-height:26px;color:#333;font-weight:400;">VARCHAR</div>
<div class="t" style="left:1758px;top:1057.79px;font-size:26px;line-height:26px;color:#333;font-weight:400;">YES</div>
<div class="t" style="left:2000px;top:1056.10px;font-size:28px;line-height:28px;color:#fc6125;font-weight:400;">operator (to be Created)</div>
<div class="t" style="left:2430px;top:1057.79px;font-size:26px;line-height:26px;color:#333;font-weight:400;">STRING</div>
<div class="t" style="left:2716px;top:1057.79px;font-size:26px;line-height:26px;color:#333;font-weight:400;">YES</div>
<svg style="position:absolute;left:939px;top:1140px;" width="35" height="35" viewBox="0 0 35 35"><rect x="1" y="1" width="33" height="33" rx="4" fill="#f2f2f2" stroke="#d5d6da" stroke-width="2"/><polyline points="9.3,17.4 14.5,22.6 25.8,11.3" fill="none" stroke="#c4c4c4" stroke-width="3.4"/></svg>
<div class="t" style="left:1064px;top:1144.10px;font-size:28px;line-height:28px;color:#333;font-weight:400;">operate_time</div>
<div class="t" style="left:1494px;top:1145.79px;font-size:26px;line-height:26px;color:#333;font-weight:400;">DATETIME</div>
<div class="t" style="left:1758px;top:1145.79px;font-size:26px;line-height:26px;color:#333;font-weight:400;">YES</div>
<div class="t" style="left:2000px;top:1124.00px;font-size:28px;line-height:28px;color:#fc6125;font-weight:400;">operate_time (to be Create</div>
<div class="t" style="left:2000px;top:1164.10px;font-size:28px;line-height:28px;color:#fc6125;font-weight:400;">d)</div>
<div class="t" style="left:2430px;top:1145.79px;font-size:26px;line-height:26px;color:#333;font-weight:400;">DATETIME64</div>
<div class="t" style="left:2716px;top:1145.79px;font-size:26px;line-height:26px;color:#333;font-weight:400;">YES</div>
<svg style="position:absolute;left:939px;top:1228px;" width="35" height="35" viewBox="0 0 35 35"><rect x="1" y="1" width="33" height="33" rx="4" fill="#f2f2f2" stroke="#d5d6da" stroke-width="2"/><polyline points="9.3,17.4 14.5,22.6 25.8,11.3" fill="none" stroke="#c4c4c4" stroke-width="3.4"/></svg>
<div class="t" style="left:1064px;top:1232.10px;font-size:28px;line-height:28px;color:#333;font-weight:400;">score_status</div>
<div class="t" style="left:1494px;top:1233.79px;font-size:26px;line-height:26px;color:#333;font-weight:400;">INT</div>
<div class="t" style="left:1758px;top:1233.79px;font-size:26px;line-height:26px;color:#333;font-weight:400;">YES</div>
<div class="t" style="left:2000px;top:1212.00px;font-size:28px;line-height:28px;color:#fc6125;font-weight:400;">score_status (to be Create</div>
<div class="t" style="left:2000px;top:1252.10px;font-size:28px;line-height:28px;color:#fc6125;font-weight:400;">d)</div>
<div class="t" style="left:2430px;top:1233.79px;font-size:26px;line-height:26px;color:#333;font-weight:400;">INT32</div>
<div class="t" style="left:2716px;top:1233.79px;font-size:26px;line-height:26px;color:#333;font-weight:400;">YES</div>
<svg style="position:absolute;left:939px;top:1316px;" width="35" height="35" viewBox="0 0 35 35"><rect x="1" y="1" width="33" height="33" rx="4" fill="#f2f2f2" stroke="#d5d6da" stroke-width="2"/><polyline points="9.3,17.4 14.5,22.6 25.8,11.3" fill="none" stroke="#c4c4c4" stroke-width="3.4"/></svg>
<div class="t" style="left:1064px;top:1320.10px;font-size:28px;line-height:28px;color:#333;font-weight:400;">score_rule_id</div>
<div class="t" style="left:1494px;top:1321.79px;font-size:26px;line-height:26px;color:#333;font-weight:400;">VARCHAR</div>
<div class="t" style="left:1758px;top:1321.79px;font-size:26px;line-height:26px;color:#333;font-weight:400;">YES</div>
<div class="t" style="left:2000px;top:1300.00px;font-size:28px;line-height:28px;color:#fc6125;font-weight:400;">score_rule_id (to be Create</div>
<div class="t" style="left:2000px;top:1340.10px;font-size:28px;line-height:28px;color:#fc6125;font-weight:400;">d)</div>
<div class="t" style="left:2430px;top:1321.79px;font-size:26px;line-height:26px;color:#333;font-weight:400;">STRING</div>
<div class="t" style="left:2716px;top:1321.79px;font-size:26px;line-height:26px;color:#333;font-weight:400;">YES</div>
<svg style="position:absolute;left:939px;top:1404px;" width="35" height="35" viewBox="0 0 35 35"><rect x="1" y="1" width="33" height="33" rx="4" fill="#f2f2f2" stroke="#d5d6da" stroke-width="2"/><polyline points="9.3,17.4 14.5,22.6 25.8,11.3" fill="none" stroke="#c4c4c4" stroke-width="3.4"/></svg>
<div class="t" style="left:1064px;top:1408.10px;font-size:28px;line-height:28px;color:#333;font-weight:400;">member_level</div>
<div class="t" style="left:1494px;top:1409.79px;font-size:26px;line-height:26px;color:#333;font-weight:400;">INT</div>
<div class="t" style="left:1758px;top:1409.79px;font-size:26px;line-height:26px;color:#333;font-weight:400;">YES</div>
<div class="t" style="left:2000px;top:1388.00px;font-size:28px;line-height:28px;color:#fc6125;font-weight:400;">member_level (to be Create</div>
<div class="t" style="left:2000px;top:1428.10px;font-size:28px;line-height:28px;color:#fc6125;font-weight:400;">d)</div>
<div class="t" style="left:2430px;top:1409.79px;font-size:26px;line-height:26px;color:#333;font-weight:400;">INT32</div>
<div class="t" style="left:2716px;top:1409.79px;font-size:26px;line-height:26px;color:#333;font-weight:400;">YES</div>
<svg style="position:absolute;left:939px;top:1492px;" width="35" height="35" viewBox="0 0 35 35"><rect x="1" y="1" width="33" height="33" rx="4" fill="#f2f2f2" stroke="#d5d6da" stroke-width="2"/><polyline points="9.3,17.4 14.5,22.6 25.8,11.3" fill="none" stroke="#c4c4c4" stroke-width="3.4"/></svg>
<div class="t" style="left:1064px;top:1496.10px;font-size:28px;line-height:28px;color:#333;font-weight:400;">score_type</div>
<div class="t" style="left:1494px;top:1497.79px;font-size:26px;line-height:26px;color:#333;font-weight:400;">INT</div>
<div class="t" style="left:1758px;top:1497.79px;font-size:26px;line-height:26px;color:#333;font-weight:400;">YES</div>
<div class="t" style="left:2000px;top:1496.10px;font-size:28px;line-height:28px;color:#fc6125;font-weight:400;">score_type (to be Created)</div>
<div class="t" style="left:2430px;top:1497.79px;font-size:26px;line-height:26px;color:#333;font-weight:400;">INT32</div>
<div class="t" style="left:2716px;top:1497.79px;font-size:26px;line-height:26px;color:#333;font-weight:400;">YES</div>
<svg style="position:absolute;left:939px;top:1580px;" width="35" height="35" viewBox="0 0 35 35"><rect x="1" y="1" width="33" height="33" rx="4" fill="#f2f2f2" stroke="#d5d6da" stroke-width="2"/><polyline points="9.3,17.4 14.5,22.6 25.8,11.3" fill="none" stroke="#c4c4c4" stroke-width="3.4"/></svg>
</div>
<div style="position:absolute;left:0px;top:1587px;width:2960px;height:37px;background:linear-gradient(#fcfcfc,#f0f0f0)"></div>
<div style="position:absolute;left:0px;top:1624px;width:2960px;height:114px;background:#fff"></div>
<div style="position:absolute;left:1146px;top:1658px;width:199px;height:70px;border:2px solid #d4d6db;border-radius:7px;box-sizing:border-box;background:linear-gradient(#ffffff,#f2f2f2)"></div>
<svg style="position:absolute;left:1180px;top:1676px;" width="28" height="30" viewBox="0 0 28 30"><path d="M21.5 21.4 A8.1 8.1 0 1 1 19.8 12.7" fill="none" stroke="#262626" stroke-width="1.9"/><path d="M22.7 9.8 L22.7 16.9 L15.5 16.9 Z" fill="#262626"/></svg>
<div class="t" style="left:1215px;top:1679.14px;font-size:27px;line-height:27px;color:#262626;font-weight:400;">Refresh</div>
<div style="position:absolute;left:1389px;top:1658px;width:177px;height:70px;border:2px solid #d4d6db;border-radius:7px;box-sizing:border-box;background:linear-gradient(#ffffff,#f2f2f2)"></div>
<div class="t" style="left:1422px;top:1678.80px;font-size:28px;line-height:28px;color:#262626;font-weight:400;">Previous</div>
<div style="position:absolute;left:1610px;top:1658px;width:192px;height:70px;background:#22aff5;border-radius:7px"></div>
<div class="t" style="left:1644px;top:1678.80px;font-size:28px;line-height:28px;color:#fff;font-weight:400;">Next Step</div>
</body></html>
